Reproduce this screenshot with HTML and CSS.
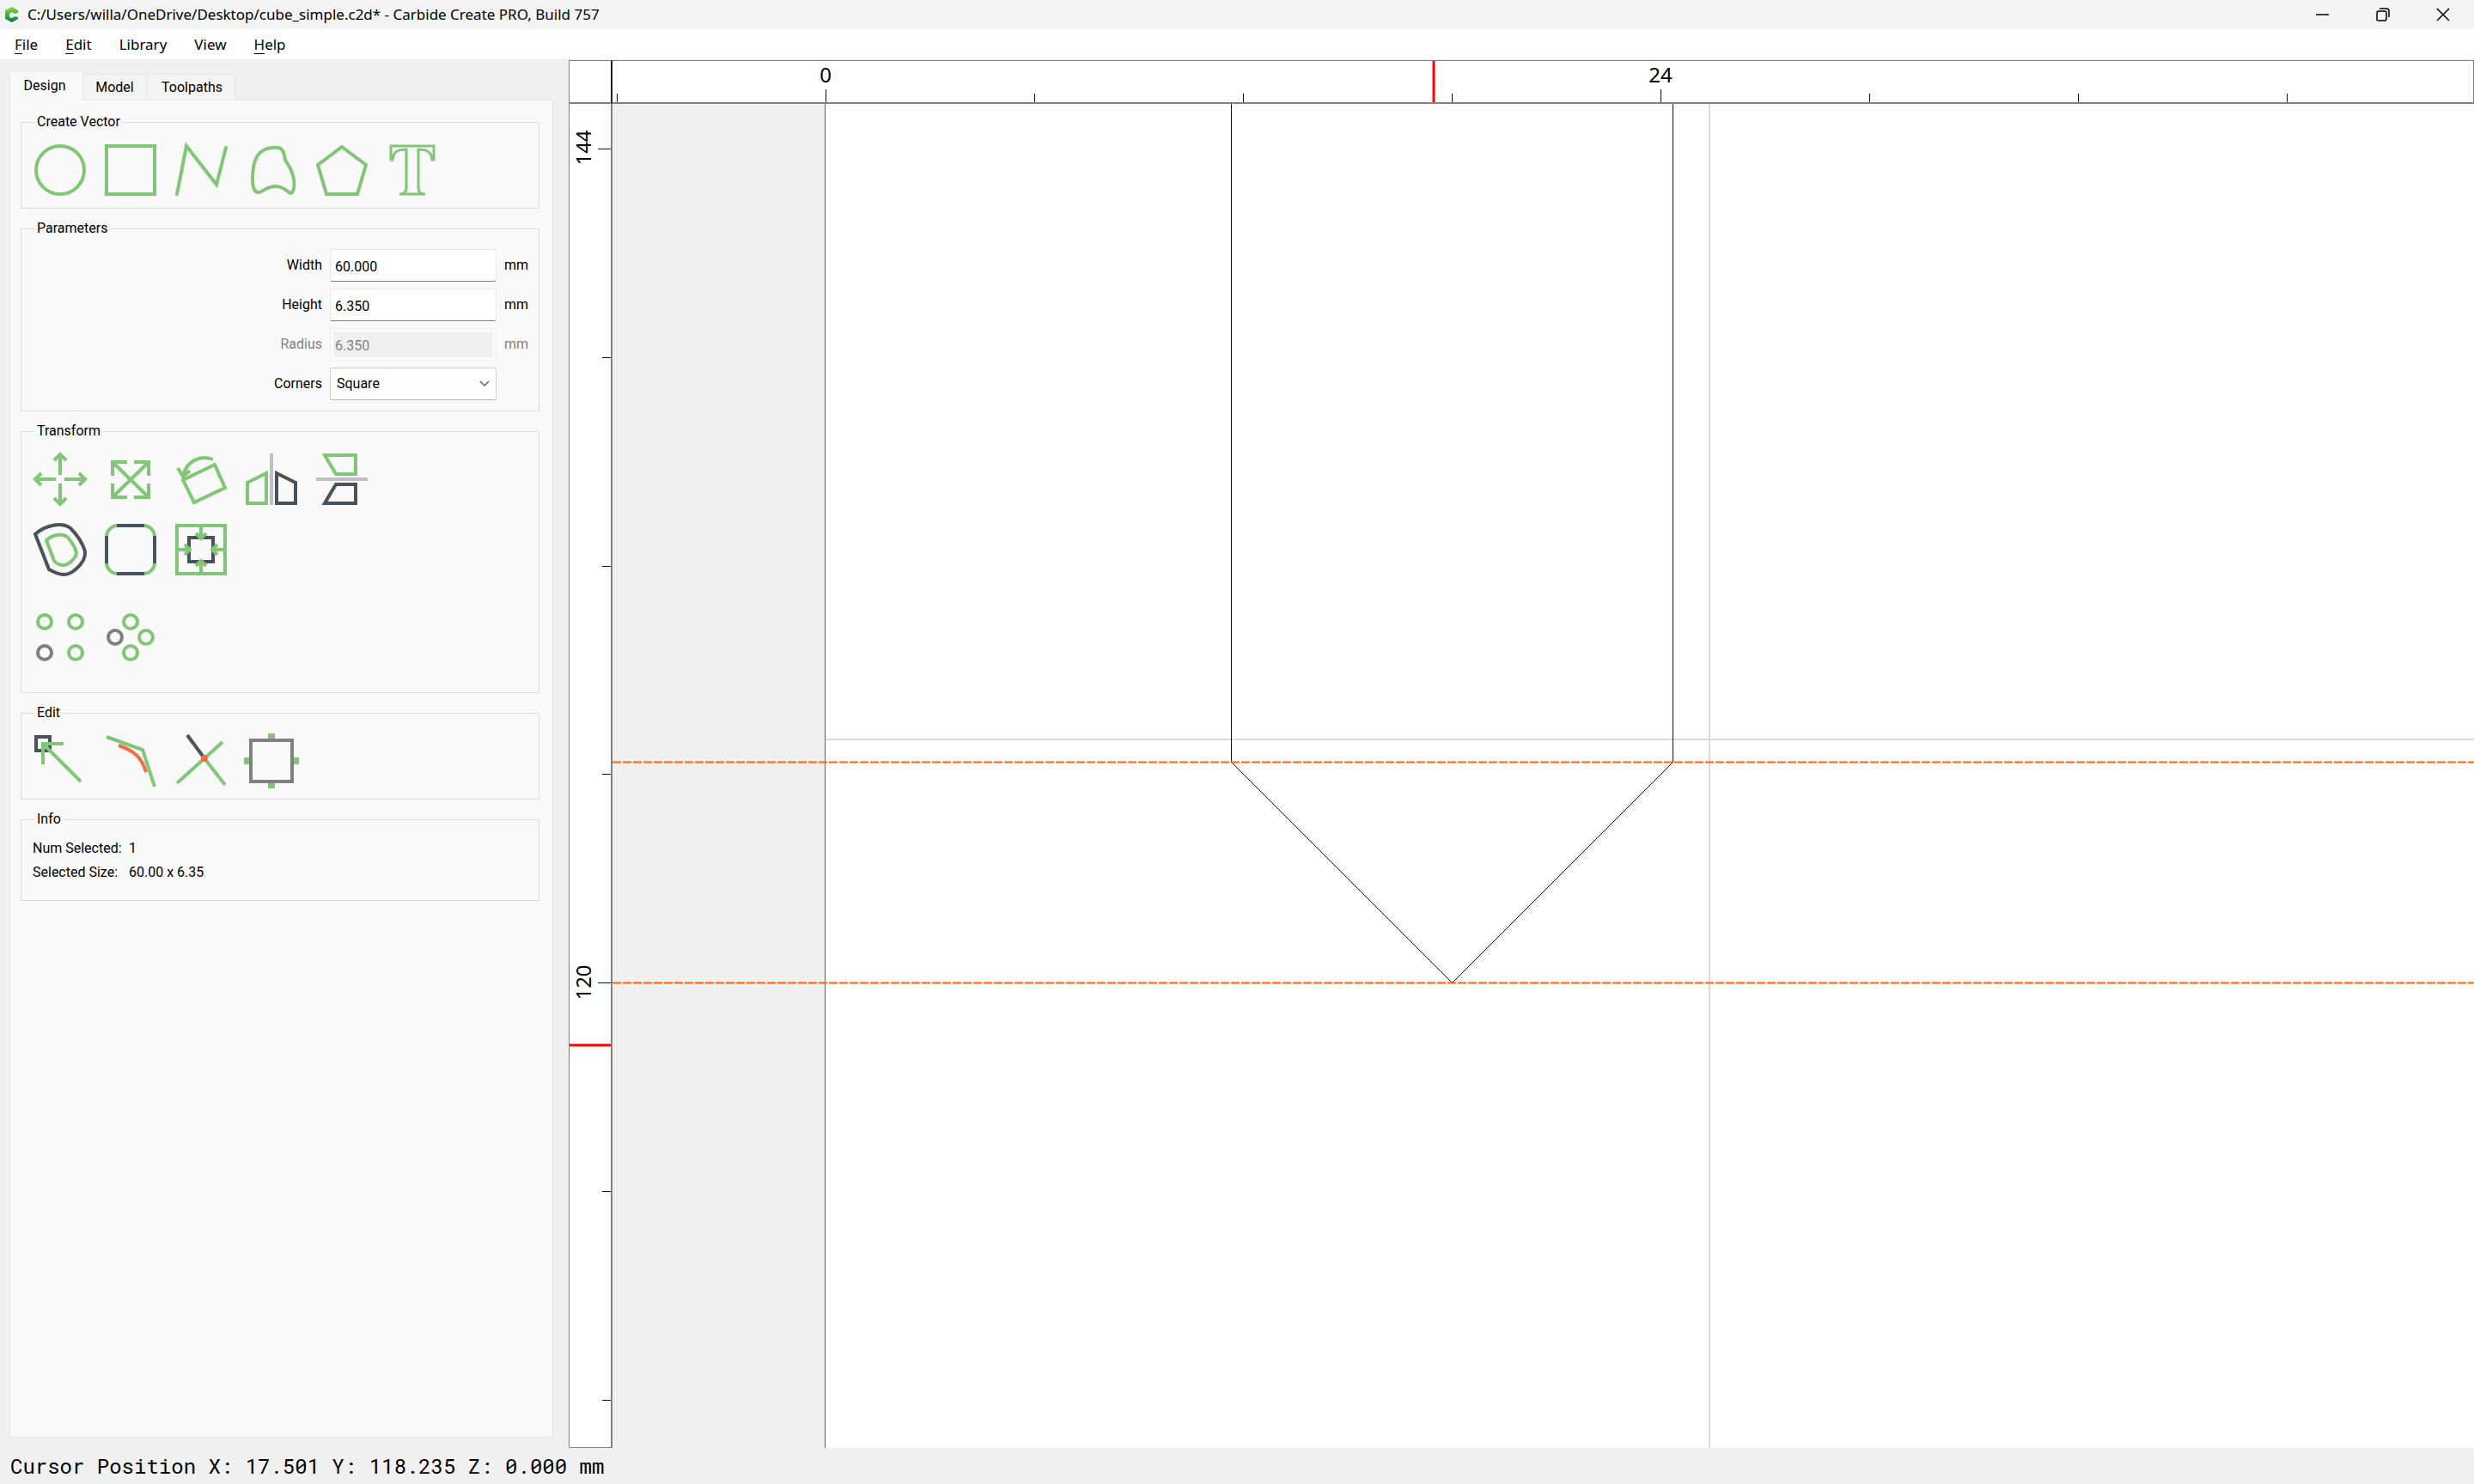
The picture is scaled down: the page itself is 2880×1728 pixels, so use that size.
FILE: index.html
```html
<!DOCTYPE html>
<html lang="en">
<head>
<meta charset="utf-8">
<title>C:/Users/willa/OneDrive/Desktop/cube_simple.c2d* - Carbide Create PRO, Build 757</title>
<link rel="stylesheet" href="styles.css">
</head>
<body>
<div class="app">
  <header class="titlebar">
    <svg class="logo" viewBox="0 0 18 20" aria-hidden="true">
      <defs><linearGradient id="logo-fill" x1="0" y1="0" x2="0" y2="1"><stop offset="0" stop-color="#8fd02f"/><stop offset="0.55" stop-color="#3fae4a"/><stop offset="1" stop-color="#04703c"/></linearGradient></defs>
      <path d="M9 1L16 5V8L12 9L9 7L6 9V13L9 14L12 12L16 13V15L9 19L1 15V5Z" fill="url(#logo-fill)"/>
    </svg>
    <h1 class="title">C:/Users/willa/OneDrive/Desktop/cube_simple.c2d* - Carbide Create PRO, Build 757</h1>
    <div class="window-buttons">
      <button class="window-button" type="button" aria-label="Minimize"><svg viewBox="0 0 16 16"><path d="M0 8H15"/></svg></button>
      <button class="window-button" type="button" aria-label="Restore"><svg viewBox="0 0 16 16"><rect x="1" y="4" width="11" height="11" rx="2"/><path d="M4 1H12Q15 1 15 4V11"/></svg></button>
      <button class="window-button" type="button" aria-label="Close"><svg viewBox="0 0 16 16"><path d="M1 1L15 15M15 1L1 15"/></svg></button>
    </div>
  </header>

  <nav class="menubar">
    <button class="menu" type="button"><u>F</u>ile</button>
    <button class="menu" type="button"><u>E</u>dit</button>
    <button class="menu" type="button">Library</button>
    <button class="menu" type="button">View</button>
    <button class="menu" type="button"><u>H</u>elp</button>
  </nav>

  <main class="main">
    <aside class="sidebar">
      <div class="tabs" role="tablist">
        <button class="tab tab-active" type="button" role="tab" aria-selected="true">Design</button>
        <button class="tab" type="button" role="tab" aria-selected="false">Model</button>
        <button class="tab tab-wide" type="button" role="tab" aria-selected="false">Toolpaths</button>
      </div>
      <div class="panel" role="tabpanel">
        <fieldset class="group">
          <legend>Create Vector</legend>
          <div class="tools">
            <button class="tool" type="button" aria-label="Circle"><svg viewBox="0 0 64 64"><circle class="green" cx="32" cy="32" r="28"/></svg></button>
            <button class="tool" type="button" aria-label="Rectangle"><svg viewBox="0 0 64 64"><rect class="green" x="4" y="4" width="56" height="56"/></svg></button>
            <button class="tool" type="button" aria-label="Polyline"><svg viewBox="0 0 64 64"><path class="green round" d="M4 60L15 4L50 49L61 6"/></svg></button>
            <button class="tool" type="button" aria-label="Curve"><svg viewBox="0 0 64 64"><path class="green" d="M33 6C43 5 46 8 47 16C48 25 53 24 57 38C59 46 59 54 56 58C53 62 49 51 37 51C25 51 22 58 17 58C11 58 10 50 10 42C10 22 15 7 33 6Z"/></svg></button>
            <button class="tool" type="button" aria-label="Polygon"><svg viewBox="0 0 64 64"><path class="green" d="M32 5L60 26L50 60H14L4 26Z"/></svg></button>
            <button class="tool" type="button" aria-label="Text"><svg viewBox="0 0 64 64"><path class="green thin" d="M7 4H57V20H55C54 11 50 8 39 8V53C39 58 42 60 47 60H17C22 60 25 58 25 53V8C14 8 10 11 9 20H7Z"/></svg></button>
          </div>
        </fieldset>

        <fieldset class="group">
          <legend>Parameters</legend>
          <div class="form">
            <label for="width">Width</label><input class="field" id="width" type="text" value="60.000"><span>mm</span>
            <label for="height">Height</label><input class="field" id="height" type="text" value="6.350"><span>mm</span>
            <label class="muted" for="radius">Radius</label><input class="field" id="radius" type="text" value="6.350" disabled><span class="muted">mm</span>
            <label for="corners">Corners</label>
            <div class="select-wrap">
              <select class="select" id="corners"><option>Square</option><option>Fillet</option></select>
              <svg class="chevron" viewBox="0 0 12 8" aria-hidden="true"><path d="M1 1L6 6L11 1"/></svg>
            </div>
          </div>
        </fieldset>

        <fieldset class="group group-transform">
          <legend>Transform</legend>
          <div class="tools">
            <button class="tool" type="button" aria-label="Move"><svg viewBox="0 0 64 64"><path class="green" d="M32 4V27M32 37V60M4 32H27M37 32H60M25 10L32 3L39 10M25 54L32 61L39 54M10 25L3 32L10 39M54 25L61 32L54 39"/></svg></button>
            <button class="tool" type="button" aria-label="Scale"><svg viewBox="0 0 64 64"><path class="green" d="M11 28V12H28M36 12H53V28M53 37V53H36M28 53H11V37M11 12L53 53M53 12L11 53"/></svg></button>
            <button class="tool" type="button" aria-label="Rotate"><svg viewBox="0 0 64 64"><path class="green" d="M48 15L60 42L24 59L11 33ZM46 9C31 3 15 11 11 28M5 19L11 29L19 22"/></svg></button>
            <button class="tool" type="button" aria-label="Mirror horizontally"><svg viewBox="0 0 64 64"><path class="green" d="M26 25V60H4V36Z"/><path class="pale" d="M32 2V62"/><path class="dark" d="M38 25L60 36V60H38Z"/></svg></button>
            <button class="tool" type="button" aria-label="Mirror vertically"><svg viewBox="0 0 64 64"><path class="green" d="M12 4H48V26H25Z"/><path class="pale" d="M2 32H62"/><path class="dark" d="M25 38H48V60H12Z"/></svg></button>
          </div>
          <div class="tools">
            <button class="tool" type="button" aria-label="Offset"><svg viewBox="0 0 64 64"><path class="dark" d="M3 14C14 4 34 -1 44 7C52 15 58 24 61 34C62 42 57 49 50 55C41 63 33 63 19 55Z"/><path class="green" d="M16 21C24 14 37 12 42 19C46 24 50 30 51 36C50 42 42 50 36 50C32 50 27 48 25 45Z"/></svg></button>
            <button class="tool" type="button" aria-label="Fillet corners"><svg viewBox="0 0 64 64"><rect class="green" x="4" y="4" width="56" height="56" rx="13"/><path class="dark" d="M16 4H48M16 60H48M4 16V48M60 16V48"/></svg></button>
            <button class="tool" type="button" aria-label="Align"><svg viewBox="0 0 64 64"><rect class="green" x="4" y="4" width="56" height="56"/><rect class="dark" x="18" y="18" width="28" height="28"/><path class="green" d="M32 4V18M32 60V46M4 32H18M60 32H46M26 13L32 19L38 13M26 51L32 45L38 51M13 26L19 32L13 38M51 26L45 32L51 38"/></svg></button>
          </div>
          <div class="tools tools-array">
            <button class="tool" type="button" aria-label="Linear array"><svg viewBox="0 0 64 64"><circle class="green" cx="14" cy="14" r="8"/><circle class="green" cx="50" cy="14" r="8"/><circle class="grey" cx="14" cy="50" r="8"/><circle class="green" cx="50" cy="50" r="8"/></svg></button>
            <button class="tool" type="button" aria-label="Circular array"><svg viewBox="0 0 64 64"><circle class="green" cx="32" cy="14" r="8"/><circle class="green" cx="50" cy="32" r="8"/><circle class="grey" cx="14" cy="32" r="8"/><circle class="green" cx="32" cy="50" r="8"/></svg></button>
          </div>
        </fieldset>

        <fieldset class="group">
          <legend>Edit</legend>
          <div class="tools">
            <button class="tool" type="button" aria-label="Node edit"><svg viewBox="0 0 64 64"><rect class="dark" x="4" y="4" width="16" height="16"/><path class="green" d="M36 12H12V36M12 12L56 56"/></svg></button>
            <button class="tool" type="button" aria-label="Smooth curve"><svg viewBox="0 0 64 64"><path class="orange" d="M18 14C36 20 45 28 50 45"/><path class="green" d="M4 4L46 19L60 62"/></svg></button>
            <button class="tool" type="button" aria-label="Trim vectors"><svg viewBox="0 0 64 64"><path class="dark" d="M16 2L36 29"/><path class="green" d="M36 29L60 60M4 58L57 10"/><circle class="dot" cx="36" cy="29" r="4"/></svg></button>
            <button class="tool" type="button" aria-label="Join vectors"><svg viewBox="0 0 64 64"><rect class="grey" x="8" y="8" width="48" height="48"/><path class="tabs-mark" d="M28 0H36V6H28ZM28 58H36V64H28ZM0 28H6V36H0ZM58 28H64V36H58Z"/></svg></button>
          </div>
        </fieldset>

        <fieldset class="group group-info">
          <legend>Info</legend>
          <dl class="info">
            <dt>Num Selected:</dt><dd>1</dd>
            <dt>Selected Size:</dt><dd>60.00 x 6.35</dd>
          </dl>
        </fieldset>
      </div>
    </aside>

    <section class="workspace">
      <div class="corner"></div>
      <svg class="ruler-top" aria-label="Horizontal ruler">
        <path class="tick" d="M5 38V50M248 33V50M491 38V50M734 38V50M977 38V50M1220 33V50M1463 38V50M1706 38V50M1949 38V50"/>
        <text x="248" y="25">0</text>
        <text x="1220" y="25">24</text>
        <path class="cursor-mark" d="M956 0V50"/>
      </svg>
      <svg class="ruler-left" aria-label="Vertical ruler">
        <path class="tick" d="M33 52H50M38 295H50M38 538H50M38 780H50M33 1023H50M38 1266H50M38 1509H50"/>
        <text transform="translate(25 51) rotate(-90)">144</text>
        <text transform="translate(25 1023) rotate(-90)">120</text>
        <path class="cursor-mark" d="M0 1096H50"/>
      </svg>
      <svg class="canvas" aria-label="Drawing">
        <rect class="stock" x="248" y="0" width="100%" height="100%"/>
        <line class="stock-edge" x1="247.5" y1="0" x2="247.5" y2="100%"/>
        <line class="grid-line" x1="248" y1="740" x2="100%" y2="740"/>
        <line class="grid-line" x1="1277" y1="0" x2="1277" y2="100%"/>
        <path class="vector" d="M720.5 0V766.5L977.5 1023.5L1234.5 766.5V0"/>
        <line class="guide" x1="0" y1="766.5" x2="100%" y2="766.5"/>
        <line class="guide" x1="0" y1="1023.5" x2="100%" y2="1023.5"/>
      </svg>
    </section>
  </main>

  <footer class="statusbar">Cursor Position X: 17.501 Y: 118.235 Z: 0.000 mm</footer>
</div>
</body>
</html>
```

FILE: styles.css
```css
* { box-sizing: border-box; }

body {
  margin: 0;
  background: #f0f0f0;
  color: #000;
  font: 16px/24px Roboto, "Noto Sans", sans-serif;
}

button, input, select { font: inherit; color: inherit; }

button { border: 0; padding: 0; background: none; }

.app { display: flex; flex-direction: column; min-height: 100vh; }

/* Title bar and menus */
.titlebar {
  display: flex;
  align-items: center;
  height: 34px;
  padding: 0 1px 0 5px;
  background: #f3f3f3;
}

.logo { width: 18px; height: 20px; margin-right: 9px; }

.titlebar, .menubar, .workspace { font-family: "Noto Sans", "Open Sans", sans-serif; }

.title { margin: 0; font-size: 17px; font-weight: 400; white-space: nowrap; }

.window-buttons { display: flex; margin-left: auto; }

.window-button { display: grid; place-items: center; width: 70px; height: 34px; }

.window-button svg { width: 16px; height: 16px; fill: none; stroke: #000; stroke-width: 1.5; }

.menubar {
  display: flex;
  gap: 32px;
  height: 36px;
  padding: 0 17px;
  border-bottom: 1px solid #f0f0f0;
  background: #fff;
  font-size: 17px;
}

.menu u { text-underline-offset: 4px; }

.main { display: flex; flex: 1; }

/* Sidebar */
.sidebar {
  display: flex;
  flex-direction: column;
  flex: none;
  width: 662px;
  padding: 12px 18px 12px 11px;
}

.tabs { display: flex; align-items: flex-end; }

.tab {
  min-width: 74px;
  height: 30px;
  padding: 0 8px;
  border: 1px solid #e5e5e5;
  border-width: 1px 1px 0 0;
  background: #f3f3f3;
}

.tab-wide { min-width: 103px; padding: 0 5px 0 8px; }

.tab-active {
  z-index: 1;
  min-width: 86px;
  height: 35px;
  margin-bottom: -1px;
  padding-right: 12px;
  border-left-width: 1px;
  background: #f9f9f9;
}

.panel {
  display: flex;
  flex-direction: column;
  flex: 1;
  gap: 11px;
  padding: 13px 15px 12px 12px;
  border: 1px solid #e5e5e5;
  background: #f9f9f9;
}

.group {
  min-width: 0;
  margin: 0;
  padding: 12px 13px;
  border: 1px solid #dcdcdc;
}

.group legend { margin-left: 2px; padding: 0 3px; }

.group-transform { padding-bottom: 32px; }

.group-info { padding: 8px 13px 18px; }

.tools { display: flex; gap: 18px; }

.tools + .tools { margin-top: 18px; }

.tools + .tools-array { margin-top: 38px; }

.tool { width: 64px; height: 64px; }

.tool svg { display: block; width: 64px; height: 64px; fill: none; stroke-width: 4; overflow: visible; }

.green { stroke: #81c676; }
.dark { stroke: #48535b; }
.grey { stroke: #808080; }
.pale { stroke: #bfbfbf; }
.orange { stroke: #f36c4a; }
.dot { fill: #f36c4a; }
.tabs-mark { fill: #81c676; }
.round { stroke-linecap: round; }
.thin { stroke-width: 3; }

.form {
  display: grid;
  grid-template-columns: 1fr 194px 27px;
  grid-auto-rows: 38px;
  gap: 8px 9px;
  align-items: center;
}

.form label { text-align: right; }

.muted { color: #808080; }

.field, .select { width: 100%; height: 38px; border: 1px solid #e8e8e8; border-radius: 2px; background: #fff; }

.field { padding: 2px 5px 0; border-bottom-color: #808080; }

.field:disabled {
  border-color: #ececec;
  background: #f0f0f0;
  box-shadow: inset 0 0 0 3px #fbfbfb;
  color: #808080;
}

.select-wrap { position: relative; }

.select {
  display: block;
  padding: 0 7px;
  border-color: #cfcfcf;
  border-bottom-color: #b8b8b8;
  background: #fdfdfd;
  appearance: none;
}

.chevron {
  position: absolute;
  top: 15px;
  right: 8px;
  width: 12px;
  height: 8px;
  fill: none;
  stroke: #606060;
  stroke-width: 1.5;
  pointer-events: none;
}

.info {
  display: grid;
  grid-template-columns: 112px 1fr;
  grid-auto-rows: 28px;
  align-items: center;
  margin: 0;
}

.info dd { margin: 0; }

/* Rulers and drawing */
.workspace {
  display: grid;
  flex: 1;
  grid-template-columns: 51px 1fr;
  grid-template-rows: 51px 1fr;
  min-width: 0;
}

.workspace svg { display: block; width: 100%; height: 100%; }

.corner, .ruler-top, .ruler-left {
  border: 1px solid #808080;
  background: #fff;
  font-size: 24px;
}

.corner { border-right: 2px solid #222; border-bottom-width: 2px; }

.workspace .ruler-top { border-left: 0; border-bottom-width: 2px; }

.workspace .ruler-left { border-top: 0; border-right-width: 2px; }

.workspace text { text-anchor: middle; fill: #000; }

.tick { fill: none; stroke: #111; stroke-width: 1; shape-rendering: crispEdges; }

.cursor-mark { stroke: #f00; stroke-width: 3; }

.stock { fill: #fff; }
.stock-edge { stroke: #606060; stroke-width: 1; }
.grid-line { stroke: #dcdcdc; stroke-width: 2; shape-rendering: crispEdges; }
.vector { fill: none; stroke: #111; stroke-width: 1; }
.guide { stroke: #ff6600; stroke-width: 2; stroke-dasharray: 10 2; }

.statusbar {
  display: flex;
  align-items: center;
  height: 42px;
  padding: 0 12px;
  font: 24px/40px "Roboto Mono", "DejaVu Sans Mono", monospace;
  white-space: pre;
}
```
